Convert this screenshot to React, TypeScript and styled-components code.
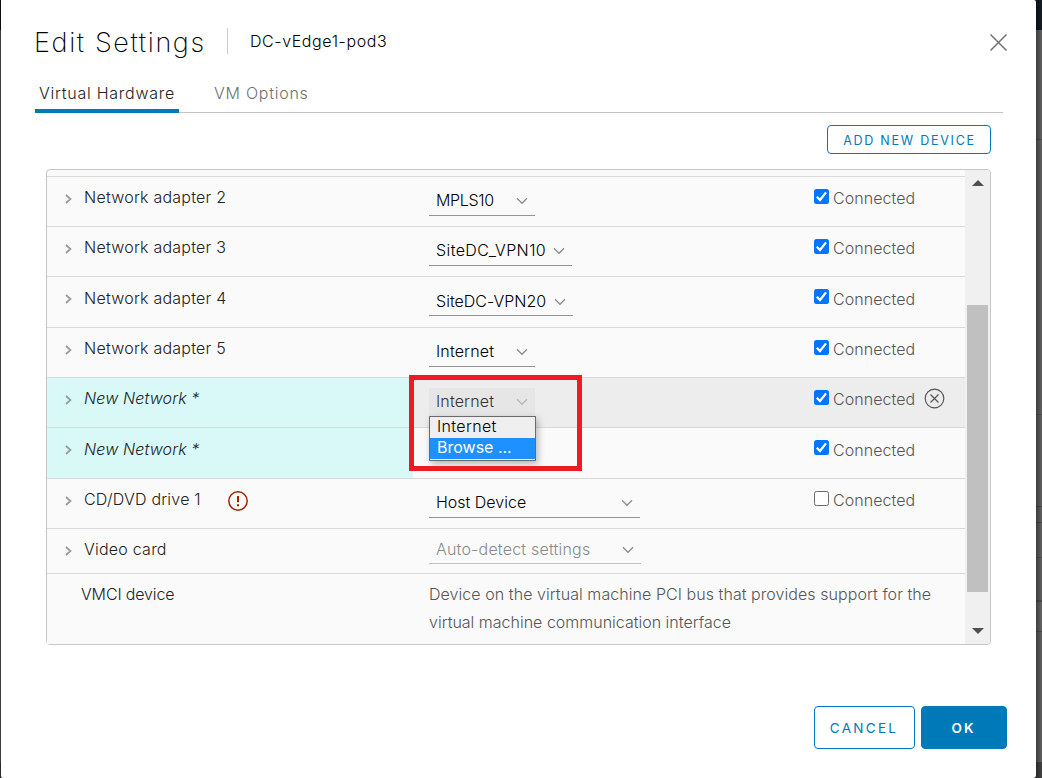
import React from "react";
import styled, { createGlobalStyle } from "styled-components";

const Global = createGlobalStyle`
  * { box-sizing: border-box; }
  body { margin: 0; overflow: hidden; font-family: Inter, "Liberation Sans", sans-serif; font-weight: 300; }
`;

const Backdrop = styled.div`
  display: flex;
  width: 1042px;
  height: 778px;
  padding: 0 6px 0 1px;
  background:
    linear-gradient(90deg, rgba(0, 0, 0, 0.4), rgba(0, 0, 0, 0)) right / 6px 100% no-repeat,
    linear-gradient(180deg,
      #141b22 0 30px, #636363 30px 139px, #525252 139px 140px, #636363 140px 414px,
      #525252 414px 415px, #636363 415px 506px, #4a4a4a 506px 507px, #636363 507px 522px,
      #4a4a4a 522px 523px, #636363 523px 557px, #525252 557px 558px, #636363 558px 600px,
      #4e4e4e 600px 602px, #666 602px 631px, #4e4e4e 631px 632px, #636363 632px 762px, #444 762px) right / 6px 100% no-repeat,
    linear-gradient(180deg, #090d12 0 30px, #3d3d3d 30px 762px, #2b2b2b 762px);
`;

const Dialog = styled.section`
  display: flex;
  flex-direction: column;
  width: 1035px;
  height: 778px;
  background: #fff;
  border-radius: 0 2px 3px 2px;
`;

const Text = styled.span<{ $size?: number; $spacing?: number; $color?: string; $weight?: number; $italic?: boolean }>`
  font-size: ${(p) => p.$size ?? 16}px;
  letter-spacing: ${(p) => p.$spacing ?? 0}px;
  color: ${(p) => p.$color ?? "#222"};
  font-weight: ${(p) => p.$weight ?? 300};
  font-style: ${(p) => (p.$italic ? "italic" : "normal")};
  line-height: 20px;
  white-space: nowrap;
`;

const Header = styled.header`
  display: flex;
  align-items: center;
  height: 82px;
  padding: 0 29px 0 33px;
`;

const Title = styled.h1`
  display: flex;
  width: 171px;
  margin: 3px 0 0;
`;

const Divider = styled.div`
  width: 1px;
  height: 26px;
  margin: 0 22px 0 22px;
  background: #ccc;
`;

const CloseButton = styled.button`
  display: flex;
  margin: 3px 0 0 auto;
  padding: 0;
  border: 0;
  background: none;
`;

const Tabs = styled.nav`
  display: flex;
  height: 31px;
  margin: 0 33px 0 34px;
  box-shadow: inset 0 -1px #c4c4c4;
`;

const Tab = styled.div<{ $active?: boolean }>`
  width: ${(p) => (p.$active ? "144px" : "auto")};
  padding: 1px 4px 0;
  border-bottom: ${(p) => (p.$active ? "4px solid #0079b8" : "0")};
  margin-right: 31px;
`;

const Toolbar = styled.div`
  display: flex;
  justify-content: flex-end;
  height: 56px;
  padding: 12px 45px 0 0;
`;

const Button = styled.button<{ $w: number; $h: number; $primary?: boolean }>`
  display: flex;
  align-items: center;
  justify-content: center;
  width: ${(p) => p.$w}px;
  height: ${(p) => p.$h}px;
  padding: 0 1px 0 0;
  border: 1px solid #0079b8;
  border-radius: 4px;
  font-family: inherit;
  background: ${(p) => (p.$primary ? "#0079b8" : "#fff")};
`;

const DeviceButton = styled(Button)`
  padding: 2px 0 0 1px;
`;

const Panel = styled.div`
  display: flex;
  width: 945px;
  height: 476px;
  margin-left: 45px;
  border: 1px solid #c6c6c6;
  border-radius: 4px;
  background: #fafafa;
`;

const Rows = styled.div`
  width: 918px;
  padding-top: 7px;
`;

const Row = styled.div<{ $h: number; $hover?: boolean }>`
  position: relative;
  display: grid;
  grid-template-columns: 366px 401px 151px;
  height: ${(p) => p.$h}px;
  box-shadow: 0 -1px #d9d9d9;
  background: ${(p) => (p.$hover ? "#ededed" : "#fafafa")};
`;

const NameCell = styled.div<{ $new?: boolean; $drop: number; $leaf?: boolean }>`
  display: flex;
  align-items: flex-start;
  padding: ${(p) => 10 + p.$drop}px 0 0 ${(p) => (p.$leaf ? 34 : 18)}px;
  background: ${(p) => (p.$new ? "#d9f9f9" : "transparent")};
  margin-bottom: ${(p) => (p.$new ? 1 : 0)}px;
`;

const Caret = styled.svg<{ $drop: number }>`
  margin: ${(p) => 7 - p.$drop}px 12px 0 0;
  flex: none;
`;

const Alert = styled.svg`
  margin: 2px 0 0 27px;
`;

const ValueCell = styled.div`
  padding-left: 16px;
`;

const Select = styled.div<{ $w: number; $h: number; $pad: number; $muted?: boolean }>`
  display: flex;
  align-items: flex-start;
  justify-content: space-between;
  width: ${(p) => p.$w}px;
  height: ${(p) => p.$h}px;
  padding: ${(p) => p.$pad}px 7px 0 7px;
  border-bottom: 1px solid ${(p) => (p.$muted ? "#c4c4c4" : "#949494")};
`;

const OpenSelect = styled(Select)`
  margin-top: 10px;
  border: 0;
  background: #e6e6e6;
`;

const SelectArrow = styled.svg`
  flex: none;
  margin-top: 7px;
`;

const Options = styled.div`
  position: absolute;
  z-index: 2;
  top: 38px;
  left: 382px;
  width: 107px;
  height: 45px;
  border: 1px solid #6b6b6b;
  background: #efefef;
  box-shadow: 2px 3px 7px rgba(0, 0, 0, 0.28);
`;

const Option = styled.div<{ $active?: boolean }>`
  height: 21px;
  padding-left: 7px;
  line-height: 18px;
  background: ${(p) => (p.$active ? "#1e90ff" : "transparent")};

  ${Text} { display: block; line-height: 19px; }
`;

const Highlight = styled.div`
  position: absolute;
  z-index: 3;
  top: -3px;
  left: 362px;
  width: 173px;
  height: 96px;
  border: 5px solid #ed1c24;
`;

const StatusCell = styled.div`
  display: flex;
  align-items: flex-start;
`;

const Box = styled.span<{ $on: boolean }>`
  display: flex;
  align-items: center;
  justify-content: center;
  width: 15px;
  height: 15px;
  margin: 12px 4px 0 0;
  border: ${(p) => (p.$on ? "0" : "1px solid #6b6b6b")};
  border-radius: 2.5px;
  background: ${(p) => (p.$on ? "#0075ff" : "#fff")};
`;

const StatusLabel = styled.span<{ $drop: number }>`
  display: flex;
  margin-top: ${(p) => 11 + p.$drop}px;
`;

const Remove = styled.svg`
  margin: 10px 0 0 9px;
`;

const Description = styled.p`
  display: flex;
  flex-direction: column;
  gap: 8px;
  margin: 10px 0 0;
`;

const Scrollbar = styled.div`
  display: flex;
  flex-direction: column;
  align-items: center;
  width: 25px;
  padding: 10px 0 9px;
  border-radius: 0 3px 3px 0;
  background: #f0f0f0;
`;

const Thumb = styled.div`
  width: 21px;
  height: 287px;
  margin: 119px 0 36px;
  background: #c0c0c0;
`;

const Footer = styled.footer`
  display: flex;
  justify-content: flex-end;
  gap: 6px;
  padding: 61px 29px 0 0;
`;

type Device = {
  name: string;
  h: number;
  drop?: number;
  isNew?: boolean;
  open?: boolean;
  hover?: boolean;
  alert?: boolean;
  value?: string;
  spacing?: number;
  selectWidth?: number;
  muted?: boolean;
  connected?: boolean;
};

const devices: Device[] = [
  { name: "Network adapter 2", h: 50, value: "MPLS10", spacing: -0.35, selectWidth: 106, connected: true },
  { name: "Network adapter 3", h: 50, value: "SiteDC_VPN10", spacing: 0.4, selectWidth: 143, connected: true },
  { name: "Network adapter 4", h: 51, drop: 1, value: "SiteDC-VPN20", spacing: 0.02, selectWidth: 144, connected: true },
  { name: "Network adapter 5", h: 50, value: "Internet", spacing: 0.15, selectWidth: 106, connected: true },
  { name: "New Network *", h: 50, isNew: true, open: true, hover: true, value: "Internet", spacing: 0.15, connected: true },
  { name: "New Network *", h: 51, drop: 1, isNew: true, connected: true },
  { name: "CD/DVD drive 1", h: 50, alert: true, value: "Host Device", spacing: 0, selectWidth: 211, connected: false },
  { name: "Video card", h: 45, value: "Auto-detect settings", spacing: 0.2, selectWidth: 212, muted: true },
];

const Arrow = ({ color = "#8c8c8c" }: { color?: string }) => (
  <SelectArrow width="12" height="8" viewBox="0 0 12 8" fill="none" stroke={color} strokeWidth="1.3">
    <path d="M1 1.3 6 6.3 11 1.3" />
  </SelectArrow>
);

const DeviceRow = ({ d }: { d: Device }) => {
  const drop = d.drop ?? 0;
  return (
    <Row $h={d.h} $hover={d.hover}>
      <NameCell $new={d.isNew} $drop={drop}>
        <Caret $drop={drop} width="7" height="10" viewBox="0 0 7 10" fill="none" stroke="#9a9a9a" strokeWidth="1.7">
          <path d="M1 1 5.5 5 1 9" />
        </Caret>
        <Text $spacing={d.isNew ? 0.12 : d.alert ? 0.22 : 0.23} $weight={350} $italic={d.isNew}>{d.name}</Text>
        {d.alert && (
          <Alert width="20" height="20" viewBox="0 0 20 20" fill="none" stroke="#a32100">
            <circle cx="10" cy="10" r="9.2" strokeWidth="1.5" />
            <path d="M10 5v6.2M10 13.2v2" strokeWidth="2" />
          </Alert>
        )}
      </NameCell>
      <ValueCell>
        {d.value && !d.open && (
          <Select $w={d.selectWidth!} $h={d.muted ? 35 : 39} $pad={(d.muted ? 10 : 13) + drop} $muted={d.muted}>
            <Text $spacing={d.spacing} $color={d.muted ? "#8a8a8a" : "#000"}>{d.value}</Text>
            <Arrow />
          </Select>
        )}
        {d.open && (
          <>
            <OpenSelect $w={106} $h={30} $pad={3}>
              <Text $spacing={d.spacing} $color="#333">{d.value}</Text>
              <Arrow color="#b8b8b8" />
            </OpenSelect>
            <Options>
              <Option><Text $spacing={0.35} $color="#000">Internet</Text></Option>
              <Option $active><Text $spacing={0} $color="#fff" $weight={400}>Browse ...</Text></Option>
            </Options>
            <Highlight />
          </>
        )}
      </ValueCell>
      {d.connected !== undefined && (
        <StatusCell>
          <Box $on={d.connected}>
            {d.connected && (
              <svg width="15" height="15" viewBox="0 0 15 15" fill="none" stroke="#fff" strokeWidth="2.3">
                <path d="M2.8 7.8 6 11 12 3.4" />
              </svg>
            )}
          </Box>
          <StatusLabel $drop={drop}><Text $spacing={0.05} $color="#565656">Connected</Text></StatusLabel>
          {d.hover && (
            <Remove width="21" height="21" viewBox="0 0 21 21" fill="none" stroke="#565656" strokeWidth="1.2">
              <circle cx="10.5" cy="10.5" r="9.3" />
              <path d="M6.5 6.5l8 8M14.5 6.5l-8 8" />
            </Remove>
          )}
        </StatusCell>
      )}
    </Row>
  );
};

export default function App() {
  return (
    <Backdrop>
      <Global />
      <Dialog>
        <Header>
          <Title><Text $size={27} $spacing={1.62} $color="#000" $weight={250}>Edit Settings</Text></Title>
          <Divider />
          <Text $spacing={0.6} $color="#000" $weight={350}>DC-vEdge1-pod3</Text>
          <CloseButton aria-label="Close">
            <svg width="17" height="17" viewBox="0 0 17 17" stroke="#737373" strokeWidth="1.5">
              <path d="M.5.5 16.5 16.5M16.5.5.5 16.5" />
            </svg>
          </CloseButton>
        </Header>
        <Tabs>
          <Tab $active><Text $spacing={0.75}>Virtual Hardware</Text></Tab>
          <Tab><Text $spacing={0.75} $color="#6f6f6f">VM Options</Text></Tab>
        </Tabs>
        <Toolbar>
          <DeviceButton $w={164} $h={29}><Text $size={12.5} $spacing={1.75} $color="#0079b8" $weight={400}>ADD NEW DEVICE</Text></DeviceButton>
        </Toolbar>
        <Panel>
          <Rows>
            {devices.map((d, i) => <DeviceRow key={i} d={d} />)}
            <Row $h={70}>
              <NameCell $drop={0} $leaf><Text $spacing={-0.15} $weight={350}>VMCI device</Text></NameCell>
              <ValueCell>
                <Description>
                  <Text $spacing={0.06} $color="#565656">Device on the virtual machine PCI bus that provides support for the</Text>
                  <Text $spacing={0} $color="#565656">virtual machine communication interface</Text>
                </Description>
              </ValueCell>
            </Row>
          </Rows>
          <Scrollbar>
            <svg width="12" height="6" viewBox="0 0 12 6" fill="#505050"><path d="M6 0 12 6H0z" /></svg>
            <Thumb />
            <svg width="12" height="6" viewBox="0 0 12 6" fill="#505050"><path d="M0 0H12L6 6z" /></svg>
          </Scrollbar>
        </Panel>
        <Footer>
          <Button $w={101} $h={43}><Text $size={13.5} $spacing={2.3} $color="#0079b8" $weight={400}>CANCEL</Text></Button>
          <Button $w={86} $h={43} $primary><Text $size={13.5} $spacing={2} $color="#fff" $weight={600}>OK</Text></Button>
        </Footer>
      </Dialog>
    </Backdrop>
  );
}
